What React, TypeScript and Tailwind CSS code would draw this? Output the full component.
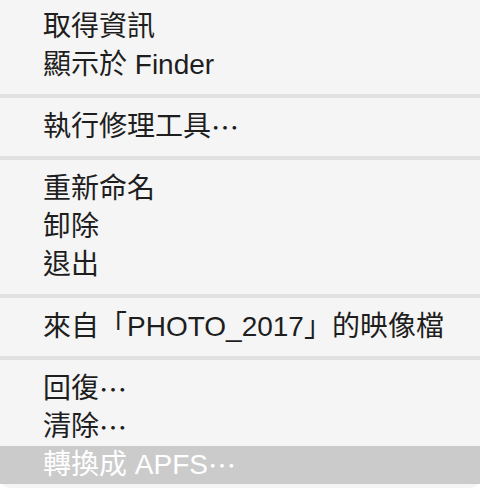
const groups: string[][] = [
  ['取得資訊', '顯示於 Finder'],
  ['執行修理工具…'],
  ['重新命名', '卸除', '退出'],
  ['來自「PHOTO_2017」的映像檔'],
  ['回復…', '清除…', '轉換成 APFS…'],
]

const highlighted = '轉換成 APFS…'

// the ellipsis sits mid-height in the CJK font, so render it from there
function Label({ text }: { text: string }) {
  if (!text.endsWith('…')) return <>{text}</>
  return (
    <>
      {text.slice(0, -1)}
      <span style={{ fontFamily: '"Noto Sans CJK TC", sans-serif' }}>…</span>
    </>
  )
}

export default function App() {
  return (
    <div className="w-[480px] h-[492px] bg-white">
      <div
        lang="zh-Hant-TW"
        className="flex flex-col pt-2 pb-1 bg-[#f5f5f5] rounded-b-[10px] text-[#1e1e1e] text-[28px] leading-none"
        style={{ fontFamily: '"Liberation Sans", "Noto Sans CJK TC", sans-serif' }}
      >
        {groups.map((items, gi) => (
          <div key={gi} className="flex flex-col">
            {gi > 0 && <div className="h-[4px] my-[10px] bg-[#e1e1e1]" />}
            {items.map((label) => (
              <div
                key={label}
                className={
                  label === highlighted
                    ? 'h-[38px] flex items-center pl-[43px] bg-[#cbcbcb] text-white'
                    : 'h-[38px] flex items-center pl-[43px]'
                }
              >
                <Label text={label} />
              </div>
            ))}
          </div>
        ))}
      </div>
    </div>
  )
}
